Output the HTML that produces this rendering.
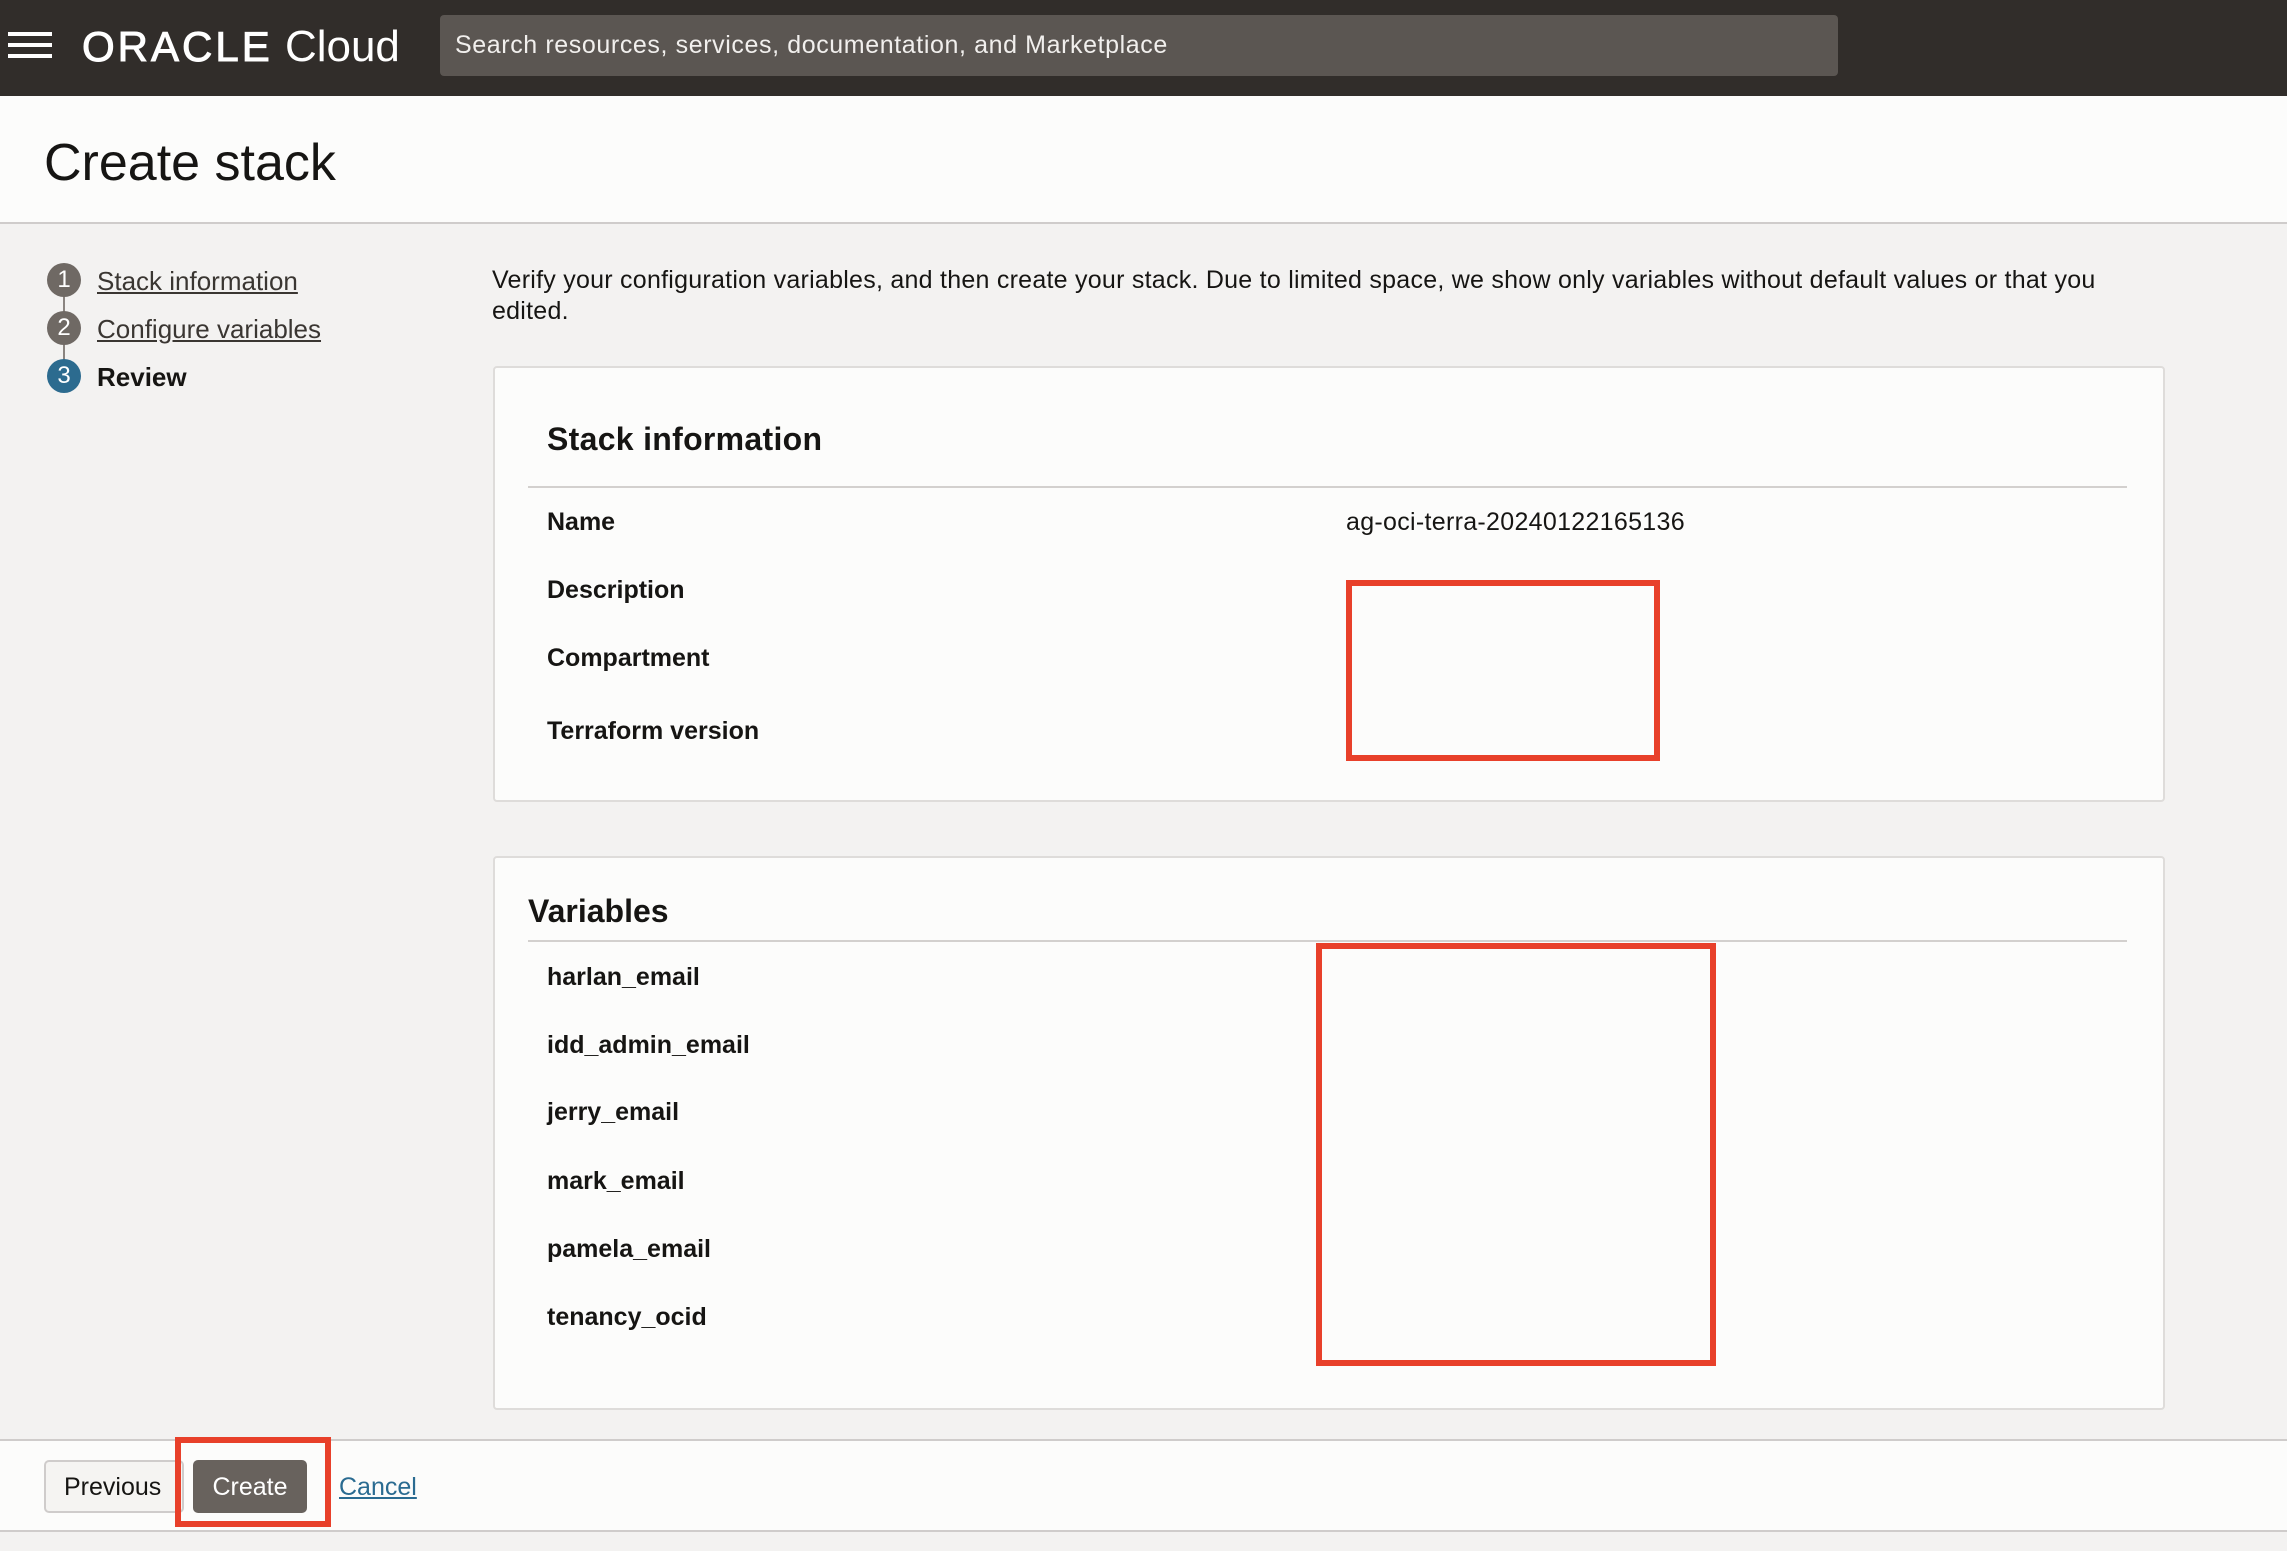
<!DOCTYPE html>
<html><head><meta charset="utf-8"><style>
*{box-sizing:border-box;margin:0;padding:0}
body{width:2287px;height:1551px;background:#f3f2f1;font-family:"Liberation Sans",Arial,sans-serif;color:#161513;position:relative;overflow:hidden}
.a{position:absolute}
.hdr{left:0;top:0;width:2287px;height:96px;background:#312d2a}
.ham{left:8px;width:44px;height:4px;background:#fff}
.search{left:440px;top:15px;width:1398px;height:61px;background:#5b5652;border-radius:4px;color:#f1efed;font-size:25px;line-height:61px;padding-left:15px;letter-spacing:0.6px}
.ttl{left:0;top:96px;width:2287px;height:128px;background:#fcfcfb;border-bottom:2px solid #cfcccb}
.ttl span{position:absolute;left:44px;top:37px;font-size:52px}
.circ{width:34px;height:34px;border-radius:50%;background:#6f6964;color:#fff;font-size:24px;text-align:center;line-height:34px;left:47px}
.step{left:97px;font-size:26px;color:#3a3632;text-decoration:underline}
.card{left:493px;width:1672px;background:#fcfcfb;border:2px solid #dedcda;border-radius:4px}
.lbl{left:547px;font-size:25px;font-weight:bold}
.hr{left:528px;width:1599px;height:2px;background:#d3d0ce}
.red{border:6px solid #e8402a}
</style></head><body>
<div class="a hdr"></div>
<div class="a ham" style="top:32px"></div>
<div class="a ham" style="top:43px"></div>
<div class="a ham" style="top:54px"></div>
<div class="a" style="left:82px;top:22px;color:#fff;font-size:44px;white-space:nowrap"><span style="letter-spacing:3px;font-size:42px;-webkit-text-stroke:1px #fff">ORACLE</span> Cloud</div>
<div class="a search">Search resources, services, documentation, and Marketplace</div>
<div class="a ttl"><span>Create stack</span></div>

<div class="a" style="left:63px;top:290px;width:2px;height:90px;background:#8a8480"></div>
<div class="a circ" style="top:263px">1</div>
<div class="a circ" style="top:311px">2</div>
<div class="a circ" style="top:359px;background:#2c6b8f">3</div>
<div class="a step" style="top:266px">Stack information</div>
<div class="a step" style="top:314px">Configure variables</div>
<div class="a step" style="top:362px;text-decoration:none;font-weight:bold;color:#161513">Review</div>

<div class="a" style="left:492px;top:265px;width:1660px;font-size:25px;line-height:31px;color:#161513;letter-spacing:0.25px">Verify your configuration variables, and then create your stack. Due to limited space, we show only variables without default values or that you edited.</div>

<div class="a card" style="top:366px;height:436px"></div>
<div class="a" style="left:547px;top:421px;font-size:32px;font-weight:bold;letter-spacing:0.3px">Stack information</div>
<div class="a hr" style="top:486px"></div>
<div class="a lbl" style="top:508px">Name</div>
<div class="a" style="left:1346px;top:508px;font-size:25px;letter-spacing:0.3px">ag-oci-terra-20240122165136</div>
<div class="a lbl" style="top:576px">Description</div>
<div class="a lbl" style="top:644px">Compartment</div>
<div class="a lbl" style="top:717px">Terraform version</div>
<div class="a red" style="left:1346px;top:580px;width:314px;height:181px"></div>

<div class="a card" style="top:856px;height:554px"></div>
<div class="a" style="left:528px;top:893px;font-size:32px;font-weight:bold">Variables</div>
<div class="a hr" style="top:940px"></div>
<div class="a lbl" style="top:963px">harlan_email</div>
<div class="a lbl" style="top:1031px">idd_admin_email</div>
<div class="a lbl" style="top:1098px">jerry_email</div>
<div class="a lbl" style="top:1167px">mark_email</div>
<div class="a lbl" style="top:1235px">pamela_email</div>
<div class="a lbl" style="top:1303px">tenancy_ocid</div>
<div class="a red" style="left:1316px;top:943px;width:400px;height:423px"></div>

<div class="a" style="left:0;top:1439px;width:2287px;height:93px;background:#fcfcfb;border-top:2px solid #cfcccb;border-bottom:2px solid #cfcccb"></div>
<div class="a" style="left:44px;top:1460px;width:140px;height:53px;border:2px solid #cfcccb;border-radius:5px;background:#f5f4f2;font-size:25px;line-height:51px;padding-left:18px">Previous</div>
<div class="a" style="left:193px;top:1460px;width:114px;height:53px;border-radius:5px;background:#68625d;color:#fff;font-size:25px;line-height:55px;text-align:center">Create</div>
<div class="a red" style="left:175px;top:1437px;width:156px;height:90px"></div>
<div class="a" style="left:339px;top:1473px;font-size:25px;color:#2a6b91;text-decoration:underline">Cancel</div>
</body></html>
